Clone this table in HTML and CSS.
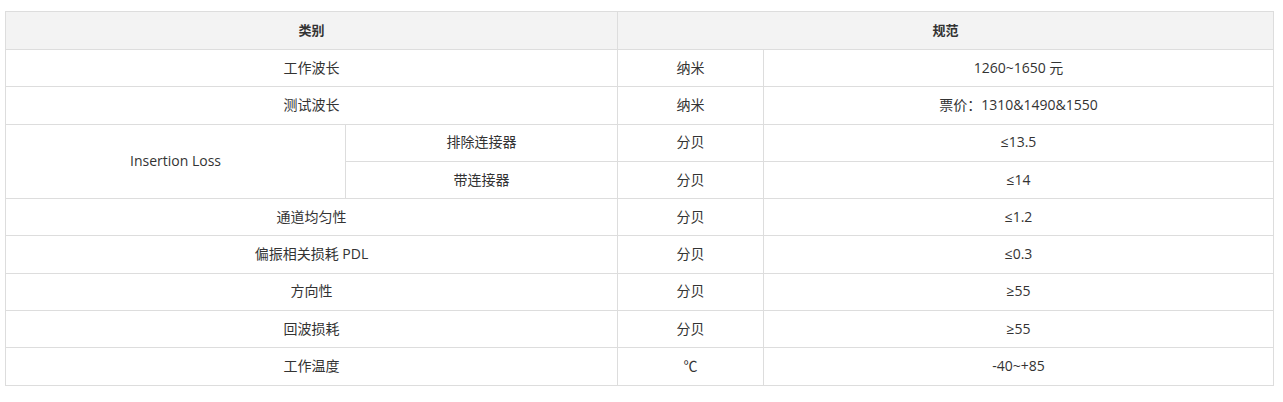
FILE: index.html
```html
<!DOCTYPE html>
<html>
<head>
<meta charset="utf-8">
<link rel="stylesheet" href="styles.css">
</head>
<body>
<div class="wrap">
<table class="spec">
<colgroup>
<col class="c1"><col class="c2"><col class="c3"><col class="c4">
</colgroup>
<thead>
<tr><th colspan="2">类别</th><th colspan="2">规范</th></tr>
</thead>
<tbody>
<tr><td colspan="2">工作波长</td><td>纳米</td><td>1260~1650 元</td></tr>
<tr><td colspan="2">测试波长</td><td>纳米</td><td>票价：1310&amp;1490&amp;1550</td></tr>
<tr><td rowspan="2">Insertion Loss</td><td>排除连接器</td><td>分贝</td><td>≤13.5</td></tr>
<tr><td>带连接器</td><td>分贝</td><td>≤14</td></tr>
<tr><td colspan="2">通道均匀性</td><td>分贝</td><td>≤1.2</td></tr>
<tr><td colspan="2">偏振相关损耗 PDL</td><td>分贝</td><td>≤0.3</td></tr>
<tr><td colspan="2">方向性</td><td>分贝</td><td>≥55</td></tr>
<tr><td colspan="2">回波损耗</td><td>分贝</td><td>≥55</td></tr>
<tr><td colspan="2">工作温度</td><td>℃</td><td>-40~+85</td></tr>
</tbody>
</table>
</div>
</body>
</html>
```
FILE: styles.css
```css
html, body {
  margin: 0;
  padding: 0;
  background: #fff;
}
.wrap {
  padding: 11px 10px 0 5px;
}
.spec {
  width: 1268px;
  border-collapse: collapse;
  table-layout: fixed;
  font-family: "Open Sans", "Noto Sans CJK SC", sans-serif;
  font-size: 14px;
  color: #333;
}
.c1 { width: 340px; }
.c2 { width: 272px; }
.c3 { width: 146px; }
.c4 { width: 510px; }
.spec th, .spec td {
  border: 1px solid #ddd;
  text-align: center;
  vertical-align: middle;
  padding: 0 8px 1px;
  height: 35.3px;
  line-height: 18px;
}
.spec th {
  background: #f3f3f3;
  font-weight: 700;
  font-size: 13px;
  height: 36px;
}
```
